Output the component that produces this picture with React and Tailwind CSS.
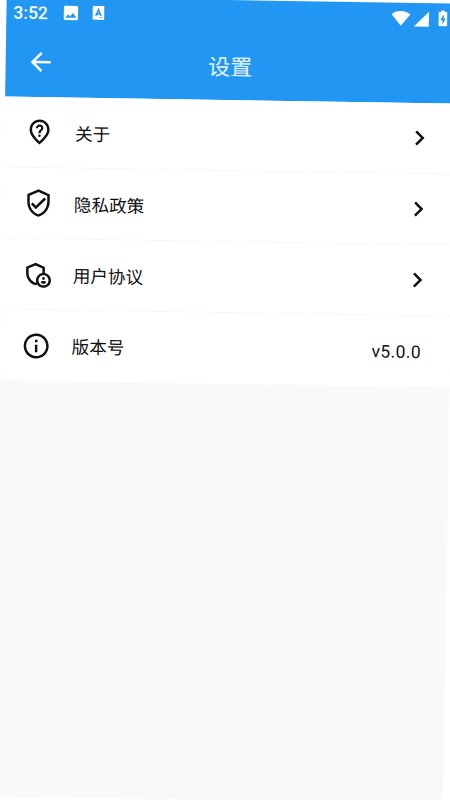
import React from 'react';
import {
    MdArrowBack,
    MdChevronRight,
    MdImage,
    MdInfoOutline,
    MdOutlineAdminPanelSettings,
    MdOutlineNotListedLocation,
    MdOutlineVerifiedUser,
    MdSignalCellular4Bar,
} from 'react-icons/md';

const items = [
    { icon: MdOutlineNotListedLocation, label: '关于' },
    { icon: MdOutlineVerifiedUser, label: '隐私政策' },
    { icon: MdOutlineAdminPanelSettings, label: '用户协议' },
    { icon: MdInfoOutline, label: '版本号', value: 'v5.0.0' },
];

const StatusBar = () => {
    return (
        <div className="flex h-[30px] items-center pl-[7px] pr-[8px] text-white">
            <span className="w-[48px] pt-[3px] font-['Roboto'] text-[17.5px] font-medium leading-none">3:52</span>
            <MdImage className="size-[19px]" />

            {/* keyboard language badge */}
            <svg viewBox="0 0 12 14" className="ml-[12px] h-[14px] w-[12px]">
                <path
                    fillRule="evenodd"
                    fill="currentColor"
                    d="M1 0h10a1 1 0 0 1 1 1v12a1 1 0 0 1-1 1H1a1 1 0 0 1-1-1V1a1 1 0 0 1 1-1zM6.500 11.600v.5h4v-.5z"
                />
                <path d="M3.3 10 6 3.8 8.7 10M4.3 8h3.4" fill="none" stroke="#2196f3" strokeWidth="1.5" />
            </svg>

            <div className="ml-auto flex items-center">
                <svg viewBox="0 0 19 15" className="h-[15px] w-[19px]">
                    <path d="M0 3.4Q9.500-3.400 19 3.400L9.500 15z" fill="currentColor" />
                </svg>
                <MdSignalCellular4Bar className="ml-[2px] mt-px size-[18px]" />
                <svg viewBox="0 0 9 16" className="ml-[8px] h-[16px] w-[9px]">
                    <path
                        fillRule="evenodd"
                        fill="currentColor"
                        d="M2.700 0h3.600v1.600H8a1 1 0 0 1 1 1V15a1 1 0 0 1-1 1H1a1 1 0 0 1-1-1V2.600a1 1 0 0 1 1-1h1.700zM5.400 4 2 9.600h2V14l3.200-5.800H5.400z"
                    />
                </svg>
            </div>
        </div>
    );
};

const Header = () => {
    return (
        <div className="h-[99.5px] bg-[#2196f3] text-white">
            <StatusBar />
            <div className="grid h-[70px] grid-cols-[60px_1fr_60px] items-center">
                <MdArrowBack className="ml-5 size-[30px]" />
                <h1 className="text-center text-[22px] leading-none text-white/90">设置</h1>
            </div>
        </div>
    );
};

const Row = ({ icon: Icon, label, value }) => {
    return (
        <div className="flex h-[71px] items-center border-b border-[#f7f7f7] bg-white pl-[19.5px] pr-[29px] text-[#111] last:border-b-0">
            <Icon className="mt-px size-[30px]" />
            <span className="ml-[21px] pt-[2px] text-[17.6px] leading-none">{label}</span>
            {value ? (
                <span className="ml-auto pt-[3px] font-['Roboto'] text-[17.5px] leading-none tracking-[0.4px]">
                    {value}
                </span>
            ) : (
                <MdChevronRight className="-mr-[10px] ml-auto mt-px size-[30px]" />
            )}
        </div>
    );
};

const SettingsPage = () => {
    return (
        <div className="h-[800px] w-[450px] overflow-hidden bg-white font-['Noto_Sans_CJK_SC',sans-serif]">
            <div className="h-[800px] w-[449px] origin-top-left translate-x-[6.7px] -translate-y-[3.5px] rotate-[0.905deg] bg-[#f9f9f9]">
                <Header />
                {items.map((item) => (
                    <Row key={item.label} {...item} />
                ))}
            </div>
        </div>
    );
};

export default SettingsPage;
